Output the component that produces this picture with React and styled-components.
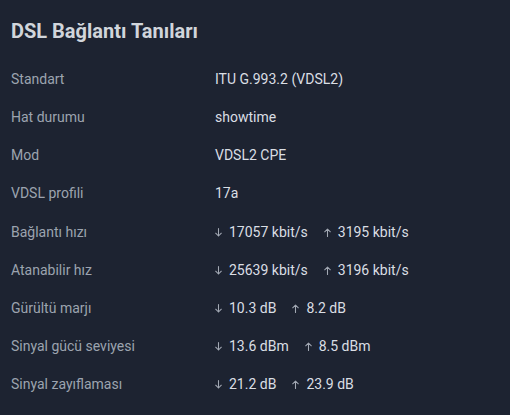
import React from 'react';
import styled, { createGlobalStyle } from 'styled-components';

const rows = [
  { label: 'Standart', value: 'ITU G.993.2 (VDSL2)' },
  { label: 'Hat durumu', value: 'showtime' },
  { label: 'Mod', value: 'VDSL2 CPE' },
  { label: 'VDSL profili', value: '17a' },
  { label: 'Bağlantı hızı', down: '17057 kbit/s', up: '3195 kbit/s' },
  { label: 'Atanabilir hız', down: '25639 kbit/s', up: '3196 kbit/s' },
  { label: 'Gürültü marjı', down: '10.3 dB', up: '8.2 dB' },
  { label: 'Sinyal gücü seviyesi', down: '13.6 dBm', up: '8.5 dBm' },
  { label: 'Sinyal zayıflaması', down: '21.2 dB', up: '23.9 dB' },
];

function Arrow({ dir }) {
  return (
    <ArrowIcon viewBox="0 0 8 10" $up={dir === 'up'}>
      <path d="M4 0.5 V9 M0.8 5.8 L4 9 L7.2 5.8" />
    </ArrowIcon>
  );
}

export default function App() {
  return (
    <>
      <GlobalStyle />
      <Panel>
        <Title>DSL Bağlantı Tanıları</Title>
        <Table>
          {rows.map((r) => (
            <Row key={r.label}>
              <Label>{r.label}</Label>
              {r.value ? (
                <Value>{r.value}</Value>
              ) : (
                <Value>
                  <Pair>
                    <Arrow dir="down" />
                    {r.down}
                  </Pair>
                  <Pair>
                    <Arrow dir="up" />
                    {r.up}
                  </Pair>
                </Value>
              )}
            </Row>
          ))}
        </Table>
      </Panel>
    </>
  );
}

const GlobalStyle = createGlobalStyle`
  html, body {
    margin: 0;
    background: #1d2331;
  }
`;

const Panel = styled.div`
  width: 510px;
  height: 415px;
  box-sizing: border-box;
  padding: 18px 11px 0;
  background: #1d2331;
  font-family: Roboto, "Liberation Sans", sans-serif;
  overflow: hidden;
`;

const Title = styled.h2`
  margin: 0 0 16px;
  font-size: 20px;
  line-height: 26px;
  font-weight: 700;
  color: #d1d5db;
`;

const Table = styled.div`
  display: flex;
  flex-direction: column;
`;

const Row = styled.div`
  display: grid;
  grid-template-columns: 204px 1fr;
  align-items: center;
  height: 38.15px;
  font-size: 14px;
`;

const Label = styled.div`
  color: #9ca3af;
`;

const Value = styled.div`
  display: flex;
  align-items: center;
  gap: 16px;
  color: #dadee4;
`;

const Pair = styled.span`
  display: inline-flex;
  align-items: center;
`;

const ArrowIcon = styled.svg`
  width: 7px;
  height: 9px;
  margin: 1px 7px 0 0;
  fill: none;
  stroke: #a3a9b4;
  stroke-width: 1.2;
  stroke-linecap: round;
  stroke-linejoin: round;
  transform: ${(p) => (p.$up ? 'rotate(180deg)' : 'none')};
`;
